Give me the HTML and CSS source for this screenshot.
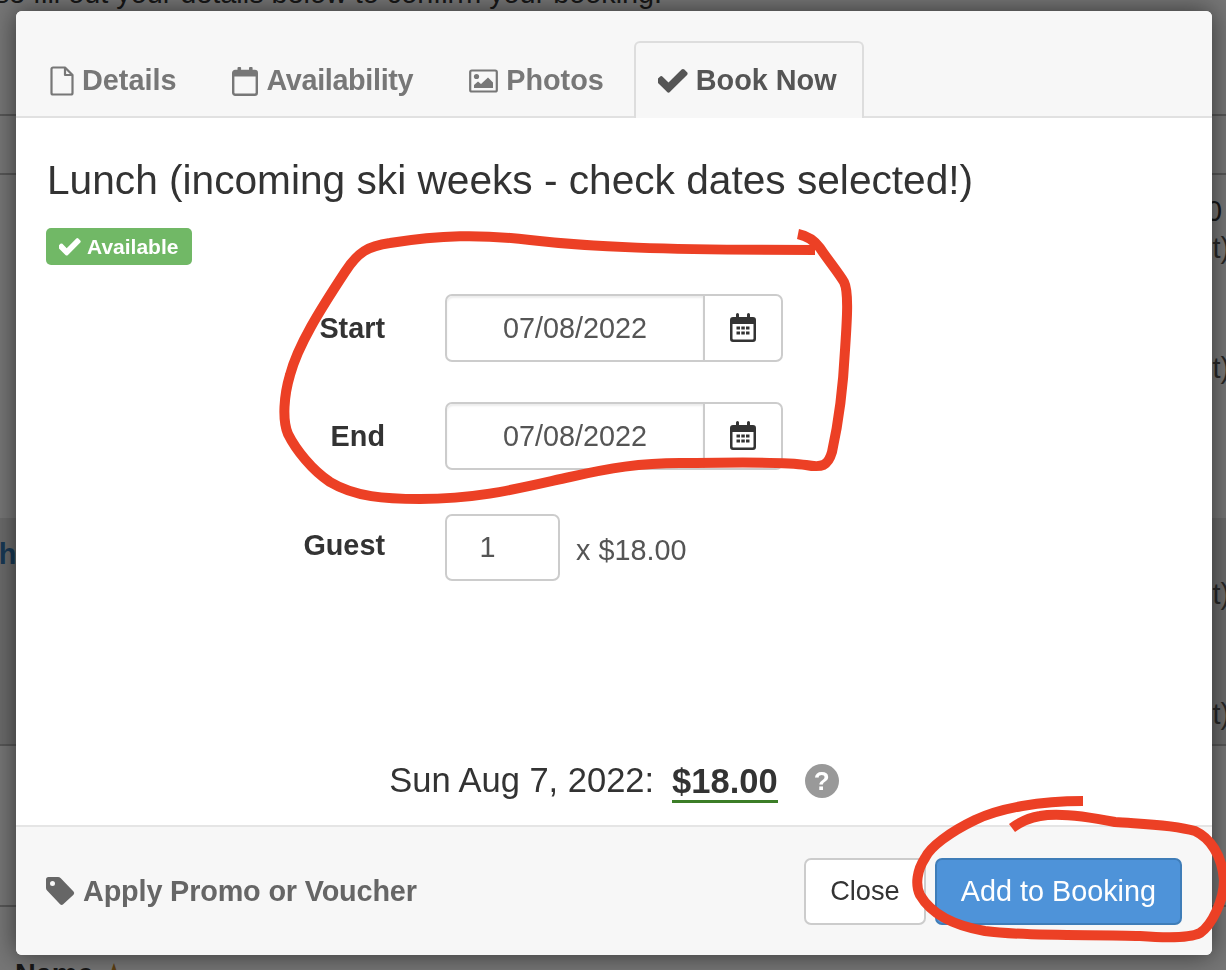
FILE: index.html
```html
<!DOCTYPE html>
<html lang="en">
<head>
  <meta charset="UTF-8">
  <meta name="viewport" content="width=device-width, initial-scale=1.0">
  <title>Book Now</title>
  <link rel="stylesheet" href="styles.css">
</head>
<body>
  <!-- page behind the dialog -->
  <div class="page">
    <div class="row row-intro"><p class="intro">Please fill out your details below to confirm your booking.</p></div>
    <div class="row row-short"></div>
    <div class="row row-tall">
      <div class="side">
        <div class="side-price">$18.00</div>
        <div class="side-note side-note-first">(per adult)</div>
        <div class="side-note side-note-gap">(per infant)</div>
      </div>
    </div>
    <div class="row row-hilite">
      <a class="row-link">Lunch</a>
      <div class="side side-hilite">
        <div class="side-note">(per adult)</div>
        <div class="side-note side-note-gap">(per infant)</div>
      </div>
    </div>
    <div class="row row-mid"></div>
    <div class="row row-name"><b>Name</b> <span class="star">★</span></div>
  </div>

  <div class="backdrop"></div>

  <div class="modal">
    <div class="modal-header">
      <ul class="tabs">
        <li class="tab">
          <svg class="icon" width="24" height="30" viewBox="0 0 24 30"><path d="M3 1.5h12l7.5 7.5v18a1.500 1.500 0 0 1-1.500 1.500H3A1.500 1.500 0 0 1 1.500 27V3A1.500 1.500 0 0 1 3 1.500zM15 1.500V9h7.500" fill="none" stroke="currentColor" stroke-width="2.2" stroke-linejoin="round"/></svg>
          Details
        </li>
        <li class="tab tab-tight">
          <svg class="icon" width="26" height="30" viewBox="0 0 26 30"><rect x="1.2" y="5" width="23.6" height="23.8" rx="2" fill="none" stroke="currentColor" stroke-width="2.4"/><path d="M1 5h24v5.5H1z" fill="currentColor"/><rect x="5.5" y="1" width="3.6" height="7" rx="1" fill="currentColor"/><rect x="17" y="1" width="3.6" height="7" rx="1" fill="currentColor"/></svg>
          Availability
        </li>
        <li class="tab">
          <svg class="icon" width="29" height="24" viewBox="0 0 29 24"><rect x="1.2" y="1.5" width="26.6" height="21" rx="1.6" fill="none" stroke="currentColor" stroke-width="2.2"/><circle cx="7.5" cy="7.5" r="2.6" fill="currentColor"/><path d="M5 19v-3l4-3.5 3 2.5 7-6.5 5 5v5.5z" fill="currentColor"/></svg>
          Photos
        </li>
        <li class="tab tab-active">
          <svg class="icon" width="30" height="30" viewBox="190 190 1500 1500"><path fill="currentColor" d="M1671 566q0 40-28 68l-724 724-136 136q-28 28-68 28t-68-28l-136-136-362-362q-28-28-28-68t28-68l136-136q28-28 68-28t68 28l294 295 656-657q28-28 68-28t68 28l136 136q28 28 28 68z"/></svg>
          Book Now
        </li>
      </ul>
    </div>

    <div class="modal-body">
      <h2 class="title">Lunch (incoming ski weeks - check dates selected!)</h2>
      <span class="badge">
        <svg width="22" height="22" viewBox="190 190 1500 1500"><path fill="currentColor" d="M1671 566q0 40-28 68l-724 724-136 136q-28 28-68 28t-68-28l-136-136-362-362q-28-28-28-68t28-68l136-136q28-28 68-28t68 28l294 295 656-657q28-28 68-28t68 28l136 136q28 28 28 68z"/></svg>
        Available
      </span>

      <form class="booking-form">
        <div class="form-row">
          <label class="form-label">Start</label>
          <div class="date-group">
            <input class="date-input" type="text" value="07/08/2022">
            <span class="date-addon">
              <svg width="26" height="30" viewBox="0 0 26 30"><path fill="#333" fill-rule="evenodd" d="M3 4h3V1.500a1.500 1.500 0 0 1 3 0V4h8V1.500a1.500 1.500 0 0 1 3 0V4h3a3 3 0 0 1 3 3v19a3 3 0 0 1-3 3H3a3 3 0 0 1-3-3V7a3 3 0 0 1 3-3zM2.500 11v14.500a1 1 0 0 0 1 1h19a1 1 0 0 0 1-1V11zM6.500 13.500h3.500v3h-3.500zM11.300 13.500h3.500v3h-3.500zM16 13.500h3.500v3H16zM6.500 18.500h3.500v3h-3.500zM11.300 18.500h3.500v3h-3.500zM16 18.500h3.500v3H16z"/></svg>
            </span>
          </div>
        </div>
        <div class="form-row">
          <label class="form-label">End</label>
          <div class="date-group">
            <input class="date-input" type="text" value="07/08/2022">
            <span class="date-addon">
              <svg width="26" height="30" viewBox="0 0 26 30"><path fill="#333" fill-rule="evenodd" d="M3 4h3V1.500a1.500 1.500 0 0 1 3 0V4h8V1.500a1.500 1.500 0 0 1 3 0V4h3a3 3 0 0 1 3 3v19a3 3 0 0 1-3 3H3a3 3 0 0 1-3-3V7a3 3 0 0 1 3-3zM2.500 11v14.500a1 1 0 0 0 1 1h19a1 1 0 0 0 1-1V11zM6.500 13.500h3.500v3h-3.500zM11.300 13.500h3.500v3h-3.500zM16 13.500h3.500v3H16zM6.500 18.500h3.500v3h-3.500zM11.300 18.500h3.500v3h-3.500zM16 18.500h3.500v3H16z"/></svg>
            </span>
          </div>
        </div>
        <div class="form-row form-row-guest">
          <label class="form-label form-label-guest">Guest</label>
          <input class="guest-input" type="text" value="1">
          <span class="guest-price">x $18.00</span>
        </div>
      </form>

      <div class="summary">
        <span>Sun Aug 7, 2022:</span>
        <strong class="summary-total">$18.00</strong>
        <span class="help">?</span>
      </div>
    </div>

    <div class="modal-footer">
      <a class="promo">
        <svg width="29" height="30" viewBox="0 0 29 30"><path fill="#666" fill-rule="evenodd" d="M2.500 1h9.500q1.500 0 2.800 1.200l12.700 13.300q1.500 1.600 0 3.200L17.200 28.300q-1.500 1.500-3.100 0L1.300 14.800Q0 13.500 0 12V3.500A2.500 2.500 0 0 1 2.500 1zM6.500 5a2.500 2.500 0 1 0 0 5 2.500 2.500 0 0 0 0-5z"/></svg>
        Apply Promo or Voucher
      </a>
      <div class="actions">
        <button class="btn btn-close" type="button">Close</button>
        <button class="btn btn-primary" type="button">Add to Booking</button>
      </div>
    </div>
  </div>

  <!-- red pen marks drawn over the screenshot -->
  <svg class="marks" width="1226" height="970" viewBox="0 0 1226 970">
    <path d="M798 234C808 236 814 240 820 248C828 260 838 272 844 282C849 292 847 320 845 350C843 390 838 425 832 452C828 466 822 468 806 465C780 461 730 463 680 463C640 463 610 468 570 477C520 488 480 499 420 499C385 499 355 497 330 482C312 470 296 450 288 434C282 420 284 395 290 375C298 345 320 310 345 272C358 252 368 246 390 243C440 235 480 234 530 240C590 247 660 250 815 250" fill="none" stroke="#ec4025" stroke-width="10" stroke-linejoin="round"/>
    <path d="M1083 801C1040 801 1000 808 975 820C950 832 930 847 925 858C917 870 915 885 920 895C930 912 950 925 985 931C1030 937 1100 934 1140 936C1165 938 1190 938 1200 933C1212 925 1224 900 1224 880C1222 855 1210 838 1195 831C1170 824 1140 824 1115 822C1090 817 1060 812 1040 816C1028 818 1020 822 1012 828" fill="none" stroke="#ec4025" stroke-width="10"/>
  </svg>
</body>
</html>
```

FILE: styles.css
```css
html, body {
  margin: 0;
  height: 100%;
  overflow: hidden;
}
body {
  font-family: "Liberation Sans", Arial, sans-serif;
  font-size: 28.8px;
  color: #333;
  background: #fff;
}

/* page behind the dialog, scrolled a little so the intro is cut at the top */
.page {
  width: 1230px;
  margin-top: -22px;
}
.row {
  border-bottom: 2px solid #bbb;
  box-sizing: border-box;
}
.row-intro {
  height: 138px;
}
.intro {
  margin: 0 0 0 -63px;
  line-height: 30px;
  white-space: nowrap;
}
.row-short { height: 59px; }
.row-tall { height: 343px; border-bottom: none; }
.row-hilite {
  height: 228px;
  background: #e6e6e6;
  display: flex;
  justify-content: space-between;
}
.row-mid { height: 161px; }
.row-name {
  height: 70px;
  padding: 50px 0 0 15px;
  line-height: 34px;
  border-bottom: none;
}
.star { color: #c8892a; }
.row-link {
  margin: 19px 0 0 -70px;
  line-height: 34px;
  font-weight: bold;
  color: #337ab7;
}
.side {
  text-align: right;
  padding-top: 19px;
}
.side-hilite { padding-top: 60px; }
.side-price {
  line-height: 34px;
  padding-right: 8px;
}
.side-note {
  line-height: 32px;
  color: #555;
}
.side-note-first { margin-top: 4px; }
.side-note-gap { margin-top: 88px; }

.backdrop {
  position: fixed;
  inset: 0;
  background: rgba(0, 0, 0, 0.54);
}

/* dialog */
.modal {
  position: fixed;
  left: 16px;
  top: 11px;
  width: 1196px;
  height: 944px;
  display: flex;
  flex-direction: column;
  background: #fff;
  border-radius: 6px;
  box-shadow: 0 0 26px rgba(0, 0, 0, 0.55);
}
.modal-header {
  height: 107px;
  box-sizing: border-box;
  background: #f7f7f7;
  border-bottom: 2px solid #e1e1e1;
  border-radius: 6px 6px 0 0;
  display: flex;
  align-items: flex-end;
  padding-left: 9px;
}
.tabs {
  display: flex;
  gap: 6px;
  list-style: none;
  margin: 0 0 -2px;
  padding: 0;
}
.tab {
  display: flex;
  align-items: center;
  gap: 8px;
  height: 77px;
  box-sizing: border-box;
  padding: 0 23px;
  font-weight: bold;
  color: #777;
  border: 2px solid transparent;
  border-bottom: none;
  white-space: nowrap;
}
.tab-tight {
  letter-spacing: -0.35px;
}
.tab-active {
  margin-left: -1px;
  color: #555;
  background: #f7f7f7;
  border-color: #ddd;
  border-radius: 6px 6px 0 0;
  padding: 0 25px 0 22px;
}
.icon {
  flex: none;
}

.modal-body {
  flex: 1;
  display: flex;
  flex-direction: column;
  align-items: flex-start;
  padding: 0 30px;
}
.title {
  margin: 38px 0 0 1px;
  font-size: 40.65px;
  font-weight: normal;
  line-height: 48px;
  white-space: nowrap;
}
.badge {
  display: flex;
  align-items: center;
  gap: 6px;
  margin-top: 24px;
  height: 37px;
  padding: 0 14px 0 13px;
  font-size: 21px;
  font-weight: bold;
  color: #fff;
  background: #71b866;
  border-radius: 5px;
}
.booking-form {
  margin-top: 29px;
  display: flex;
  flex-direction: column;
  gap: 40px;
}
.form-row {
  display: flex;
  align-items: center;
  height: 68px;
}
.form-row-guest {
  margin-top: 3px;
}
.form-label {
  width: 339px;
  text-align: right;
  font-weight: bold;
  margin-right: 60px;
}
.form-label-guest {
  margin-top: -3px;
}
.date-group {
  display: flex;
  width: 338px;
  height: 68px;
  box-sizing: border-box;
  border: 2px solid #ccc;
  border-radius: 7px;
  background: #fff;
}
.date-input {
  flex: 1;
  min-width: 0;
  border: none;
  outline: none;
  background: transparent;
  border-radius: 6px 0 0 6px;
  box-shadow: inset 0 2px 2px rgba(0, 0, 0, 0.08);
  font: inherit;
  color: #555;
  text-align: center;
  padding: 0;
}
.date-addon {
  width: 76px;
  border-left: 2px solid #ccc;
  display: flex;
  align-items: center;
  justify-content: center;
}
.guest-input {
  width: 115px;
  height: 67px;
  box-sizing: border-box;
  border: 2px solid #ccc;
  border-radius: 7px;
  outline: none;
  font: inherit;
  color: #555;
  text-align: center;
  padding: 0 30px 0 0;
}
.guest-price {
  margin: 7px 0 0 16px;
  color: #555;
}
.summary {
  align-self: center;
  margin-top: auto;
  margin-bottom: 22px;
  display: flex;
  align-items: center;
  font-size: 34.5px;
}
.summary-total {
  margin-left: 18px;
  padding-top: 4px;
  border-bottom: 3px solid #3c7e28;
  line-height: 38px;
}
.help {
  margin-left: 27px;
  width: 34px;
  height: 34px;
  border-radius: 50%;
  background: #999;
  color: #fff;
  font-size: 26px;
  font-weight: bold;
  line-height: 34px;
  text-align: center;
}
.modal-footer {
  height: 130px;
  box-sizing: border-box;
  background: #f7f7f7;
  border-top: 2px solid #e5e5e5;
  border-radius: 0 0 6px 6px;
  display: flex;
  align-items: center;
  justify-content: space-between;
  padding: 0 30px;
}
.promo {
  display: flex;
  align-items: center;
  gap: 8px;
  font-weight: bold;
  color: #666;
  letter-spacing: -0.15px;
}
.actions {
  display: flex;
  gap: 9px;
}
.btn {
  height: 67px;
  box-sizing: border-box;
  padding: 0 24px;
  font: inherit;
  color: #333;
  background: #fff;
  border: 2px solid #ccc;
  border-radius: 7px;
}
.btn-close {
  font-size: 27.2px;
}
.btn-primary {
  color: #fff;
  background: #4e93d9;
  border-color: #3f7db8;
}

/* hand drawn marks sit on top of everything */
.marks {
  position: fixed;
  left: 0;
  top: 0;
  pointer-events: none;
}
```
